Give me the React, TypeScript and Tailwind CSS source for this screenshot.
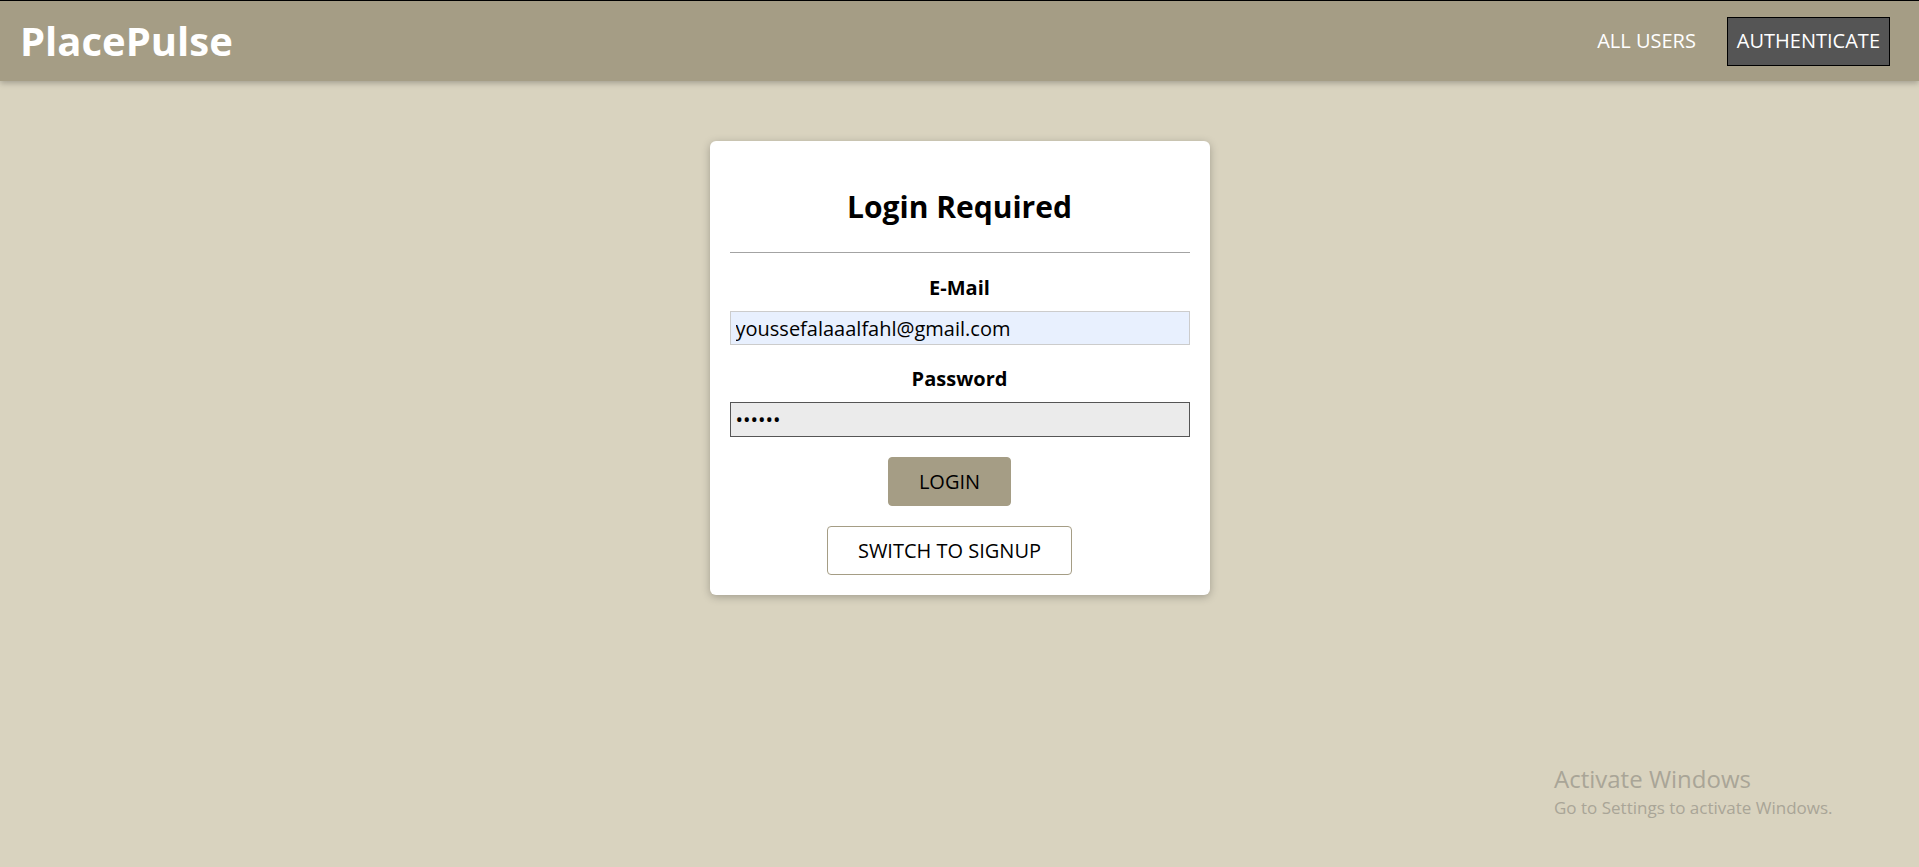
import { useState } from 'react'

// Login page: top bar with the brand and two nav links, centred auth card below.

function NavBar() {
  return (
    <header className="flex h-[81px] items-center justify-between border-t border-black bg-[#a59d85] pl-[20px] pr-[29px] shadow-[0_2px_6px_rgba(0,0,0,0.26)]">
      <h1 className="text-[40px] font-bold leading-none text-white">PlacePulse</h1>
      <nav className="flex items-center gap-[20px]">
        <a className="px-[11px] py-[11px] text-[20px] leading-[1.4] text-white">ALL USERS</a>
        <a className="flex h-[49px] items-center border border-black bg-[#555555] px-[9px] text-[20px] leading-[1.4] text-white">
          AUTHENTICATE
        </a>
      </nav>
    </header>
  )
}

function AuthCard() {
  const [email, setEmail] = useState('youssefalaaalfahl@gmail.com')
  const [password, setPassword] = useState('123456')

  return (
    <div className="mx-auto mt-[60px] w-[500px] rounded-[6px] bg-white px-[20px] pb-[20px] pt-[48px] shadow-[0_2px_8px_rgba(0,0,0,0.26)]">
      <h2 className="text-center text-[30px] font-bold leading-[1.2] text-black">Login Required</h2>
      <hr className="mt-[27px] border-t border-[#a3a3a3]" />
      <form className="flex flex-col items-center" onSubmit={(e) => e.preventDefault()}>
        <label className="mt-[21px] text-[20px] font-bold leading-[28px]">E-Mail</label>
        <input
          type="email"
          value={email}
          onChange={(e) => setEmail(e.target.value)}
          className="mt-[9px] h-[34px] w-full border border-[#cccccc] bg-[#e8f0fe] px-[5px] text-[20px] text-black outline-none"
        />
        <label className="mt-[20px] text-[20px] font-bold leading-[28px]">Password</label>
        <input
          type="password"
          value={password}
          onChange={(e) => setPassword(e.target.value)}
          className="mt-[9px] h-[35px] w-full border border-[#555555] bg-[#ebebeb] px-[5px] text-[20px] text-black outline-none"
        />
        {/* buttons carry a right margin, so they sit a little left of centre */}
        <button
          type="submit"
          className="mr-[20px] mt-[20px] h-[49px] rounded-[4px] border border-[#a59d85] bg-[#a59d85] px-[30px] text-[20px] text-black"
        >
          LOGIN
        </button>
        <button
          type="button"
          className="mr-[20px] mt-[20px] h-[49px] rounded-[4px] border border-[#a59d85] bg-white px-[30px] text-[20px] text-black"
        >
          SWITCH TO SIGNUP
        </button>
      </form>
    </div>
  )
}

export default function App() {
  return (
    <div className="relative min-h-[867px] bg-[#d9d3bf] font-['Open_Sans',sans-serif]">
      <NavBar />
      <main>
        <AuthCard />
      </main>
      {/* OS watermark overlaid at the bottom right */}
      <div className="pointer-events-none absolute left-[1554px] top-[763px] font-['Segoe_UI','Open_Sans',sans-serif] text-[#a9a597]">
        <div className="text-[24px] leading-[1.3]">Activate Windows</div>
        <div className="mt-[2px] text-[17px] leading-[1.4]">Go to Settings to activate Windows.</div>
      </div>
    </div>
  )
}
